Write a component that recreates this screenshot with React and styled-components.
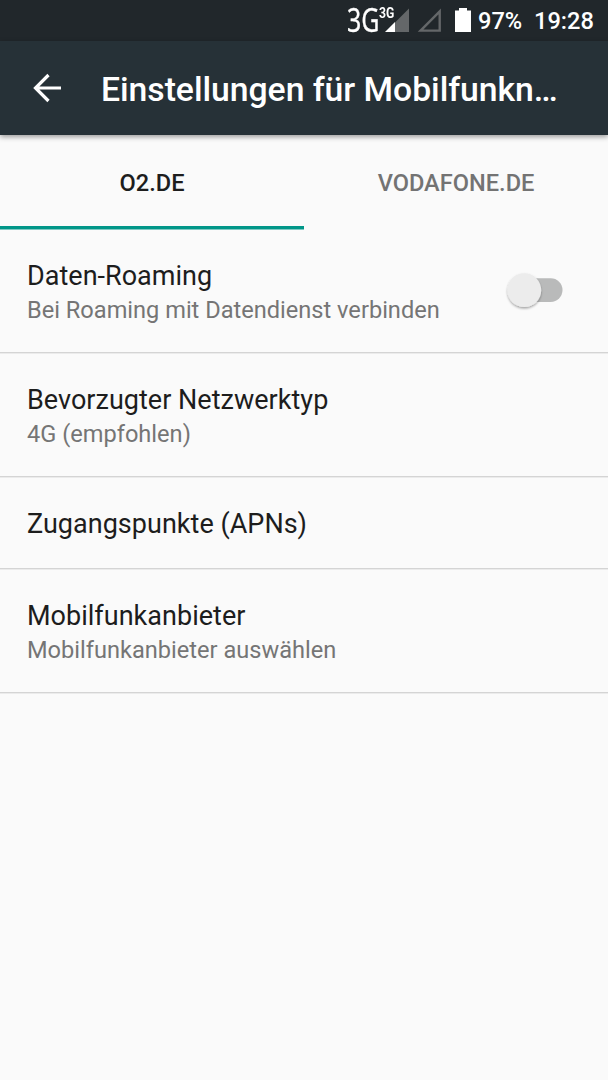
import React from "react";
import styled, { createGlobalStyle } from "styled-components";

const GlobalStyle = createGlobalStyle`
  html, body { margin: 0; padding: 0; background: #fafafa; }
  * { box-sizing: border-box; }
  body { font-family: Roboto, "Liberation Sans", sans-serif; overflow: hidden; }
`;

const Screen = styled.div`
  display: flex;
  flex-direction: column;
  width: 608px;
  height: 1080px;
  background: #fafafa;
  overflow: hidden;
`;

const StatusBar = styled.header`
  display: flex;
  flex: none;
  justify-content: flex-end;
  height: 41px;
  padding-right: 14px;
  background: #21272b;
  color: #fff;
`;

const NetworkType = styled.span`
  width: 32px;
  font: 400 32px/40px "Noto Sans", sans-serif;
  white-space: nowrap;
  -webkit-text-stroke: 0.3px #fff;
  transform: scaleX(0.78);
  transform-origin: left;
`;

const NetworkBadge = styled.span`
  width: 6px;
  font: 700 14.5px/27px Roboto, sans-serif;
  white-space: nowrap;
  transform: scaleX(0.84);
  transform-origin: left;
`;

const SignalIcon = styled.svg`
  flex: none;
  width: 88px;
  height: 41px;
`;

const StatusText = styled.span`
  width: ${(p) => p.$width}px;
  padding-left: ${(p) => p.$inset || 0}px;
  font-size: 23.6px;
  font-weight: 500;
  line-height: 43px;
  white-space: nowrap;
`;

const AppBar = styled.div`
  display: flex;
  flex: none;
  align-items: center;
  height: 94px;
  background: #263137;
  box-shadow: 0 2px 5px rgba(0, 0, 0, 0.38);
  z-index: 1;
`;

const BackButton = styled.button`
  display: block;
  width: 101px;
  height: 94px;
  padding: 0;
  border: 0;
  background: none;
`;

const Title = styled.h1`
  width: 470px;
  margin: 0;
  padding-top: 4px;
  overflow: hidden;
  color: #fff;
  font-size: 33.75px;
  font-weight: 500;
  line-height: 44px;
  letter-spacing: -0.04px;
  white-space: nowrap;
`;

const Tabs = styled.nav`
  display: flex;
  flex: none;
  height: 94px;
`;

const Tab = styled.div`
  flex: 1;
  padding-top: 1px;
  border-bottom: 3px solid ${(p) => (p.$active ? "#009688" : "transparent")};
  box-shadow: 0 1px 0 ${(p) => (p.$active ? "#7fcac3" : "transparent")};
  color: ${(p) => (p.$active ? "#1d1d1d" : "#737373")};
  font-size: 23.6px;
  font-weight: 500;
  line-height: 95px;
  text-align: center;
`;

const Row = styled.section`
  display: flex;
  flex: none;
  align-items: center;
  justify-content: space-between;
  height: ${(p) => (p.$single ? 92 : 124)}px;
  padding: 3px 44px 0 27px;
  border-bottom: 1px solid #d4d4d4;
  box-shadow: 0 1px 0 #ebebeb;
`;

const RowTitle = styled.div`
  color: #1d1d1d;
  font-size: 27px;
  line-height: 36px;
  letter-spacing: 0.02px;
`;

const RowSummary = styled.div`
  color: #757575;
  font-size: 23.6px;
  line-height: 32px;
`;

const Toggle = styled.svg`
  display: block;
  width: 60px;
  height: 44px;
`;

function Preference({ title, summary, children }) {
  return (
    <Row $single={!summary}>
      <div>
        <RowTitle>{title}</RowTitle>
        {summary && <RowSummary>{summary}</RowSummary>}
      </div>
      {children}
    </Row>
  );
}

export default function App() {
  return (
    <Screen>
      <GlobalStyle />
      <StatusBar>
        <NetworkType>3G</NetworkType>
        <NetworkBadge>3G</NetworkBadge>
        <SignalIcon viewBox="385 0 88 41">
          <path d="M409 8.5V32H385.5Z" fill="#646769" />
          <path d="M395 22V32H385Z" fill="#fff" />
          <path d="M439.7 11.5V30.6H420.6Z" fill="none" stroke="#646769" strokeWidth="2.4" />
          <path d="M459 8h8v2.5h4V32h-16V10.5h4Z" fill="#fff" />
        </SignalIcon>
        <StatusText $width={61} $inset={5}>97%</StatusText>
        <StatusText $width={60}>19:28</StatusText>
      </StatusBar>
      <AppBar>
        <BackButton aria-label="Zurück">
          <svg width="101" height="94" viewBox="0 41 101 94">
            <path d="M61 88H36M48.5 75L35.5 88L48.5 101" fill="none" stroke="#fff" strokeWidth="3.2" />
          </svg>
        </BackButton>
        <Title>Einstellungen für Mobilfunkn…</Title>
      </AppBar>
      <Tabs>
        <Tab $active>O2.DE</Tab>
        <Tab>VODAFONE.DE</Tab>
      </Tabs>
      <Preference title="Daten-Roaming" summary="Bei Roaming mit Datendienst verbinden">
        <Toggle viewBox="504 270 60 44">
          <defs>
            <filter id="thumb-shadow" x="-30%" y="-30%" width="160%" height="160%">
              <feDropShadow dx="0" dy="1.5" stdDeviation="1.3" floodOpacity="0.35" />
            </filter>
          </defs>
          <rect x="515" y="278.3" width="47.5" height="23.6" rx="11.8" fill="#b9baba" />
          <circle cx="524.3" cy="290.2" r="16.9" fill="#ececec" filter="url(#thumb-shadow)" />
        </Toggle>
      </Preference>
      <Preference title="Bevorzugter Netzwerktyp" summary="4G (empfohlen)" />
      <Preference title="Zugangspunkte (APNs)" />
      <Preference title="Mobilfunkanbieter" summary="Mobilfunkanbieter auswählen" />
    </Screen>
  );
}
